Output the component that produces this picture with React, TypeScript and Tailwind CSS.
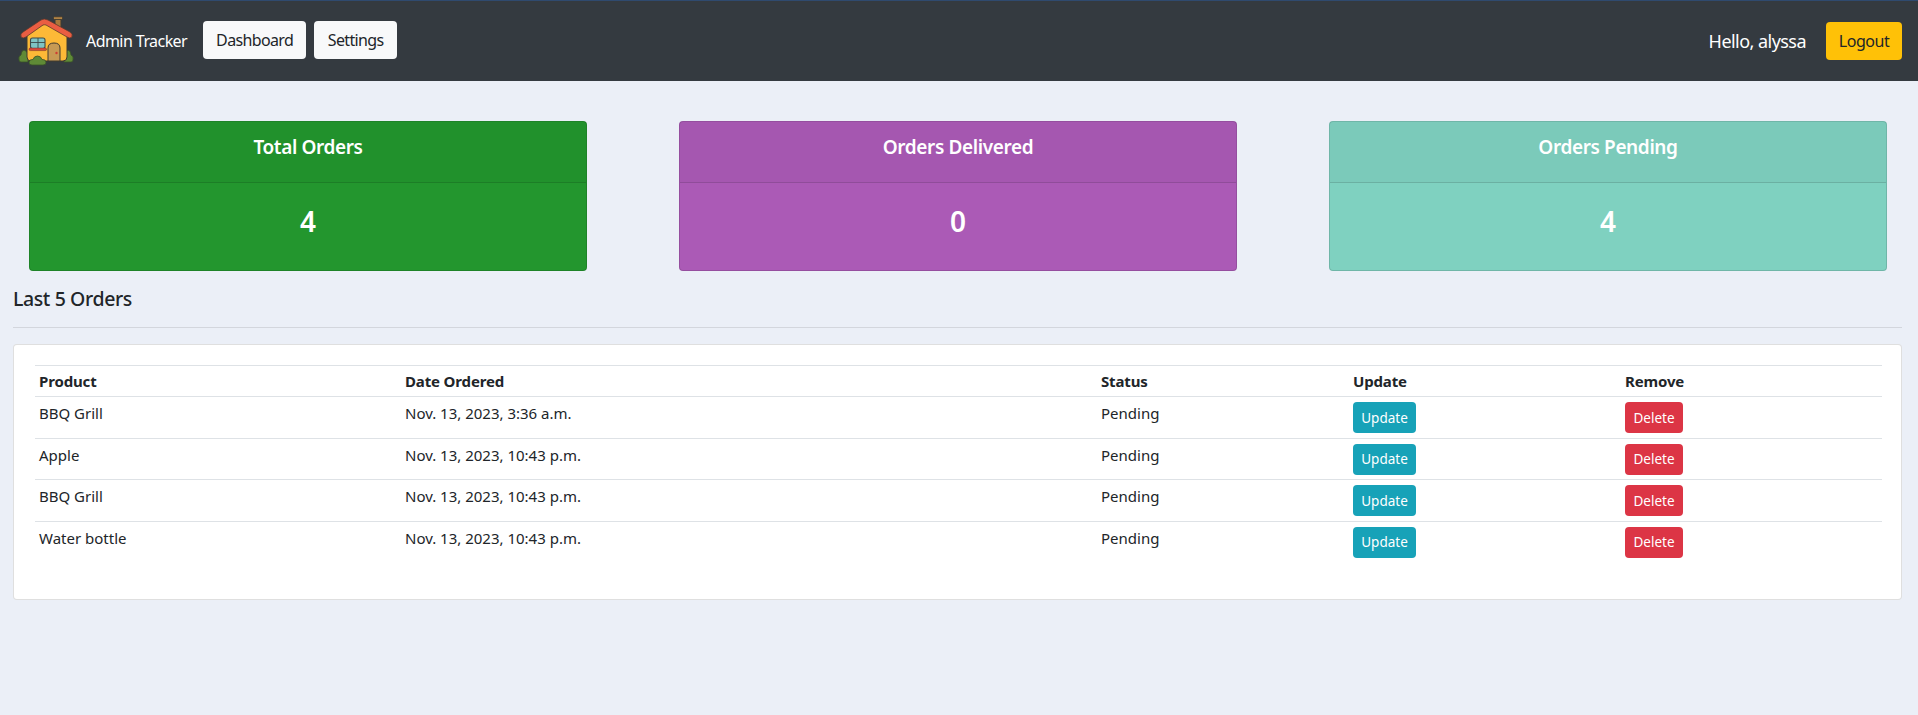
const font = '[font-family:"Noto_Sans",Roboto,sans-serif]';

const orders = [
  { product: 'BBQ Grill', date: 'Nov. 13, 2023, 3:36 a.m.' },
  { product: 'Apple', date: 'Nov. 13, 2023, 10:43 p.m.' },
  { product: 'BBQ Grill', date: 'Nov. 13, 2023, 10:43 p.m.' },
  { product: 'Water bottle', date: 'Nov. 13, 2023, 10:43 p.m.' },
];

function HouseLogo() {
  return (
    <svg viewBox="0 0 56 50" className="w-[56px] h-[50px] shrink-0">
      <rect x="37" y="2" width="6" height="10" fill="#a9793c" stroke="#3f3a30" strokeWidth="1" />
      <rect x="35.5" y="0.8" width="9" height="2.6" rx="0.8" fill="#c08c48" stroke="#3f3a30" strokeWidth="1" />
      <path d="M1 44 Q0 40 3 39 Q3 35 6 34 Q9 35 10 38 V46 H3 Q1 46 1 44 Z" fill="#5f8a36" stroke="#39502a" strokeWidth="0.8" />
      <path d="M55 44 Q56 40 53 39 Q53 35 50 34 Q47 35 46 38 V46 H53 Q55 46 55 44 Z" fill="#5f8a36" stroke="#39502a" strokeWidth="0.8" />
      <path d="M9 19 L27 7 L49 19 V41 Q49 45 45 45 H13 Q9 45 9 41 Z" fill="#fdb937" stroke="#3f3a30" strokeWidth="1" />
      <path d="M3 21 Q2 18 5 16 L23 4 Q26 2 30 4 L52 16 Q55 18 54 21 Q52 23 49 21 L28 9 Q27 8.5 25 9 L8 21 Q5 23 3 21 Z" fill="#ea5d42" stroke="#5c3a2c" strokeWidth="0.8" />
      <rect x="12.5" y="22" width="14.5" height="10.5" rx="2" fill="#7fc4c4" stroke="#3d4a4a" strokeWidth="1.1" />
      <path d="M20 22 V32 M12.5 26.5 H27" stroke="#3d4a4a" strokeWidth="0.9" />
      <rect x="11" y="32" width="17.5" height="2.6" rx="1.3" fill="#d9473a" stroke="#6a3128" strokeWidth="0.5" />
      <path d="M30 45 V32 Q30 27 36 27 Q42 27 42 32 V45 Z" fill="#c79a54" stroke="#3f3a30" strokeWidth="1" />
      <circle cx="38.5" cy="37" r="1.2" fill="#d13c33" />
      <path d="M14 49 Q10.5 49 11 46 Q11.5 43 15 43.5 Q16 40 19.5 40 Q23 40 24 43.5 Q27.5 43 28 46 Q28.5 49 25 49 Z" fill="#5f8a36" stroke="#39502a" strokeWidth="0.8" />
    </svg>
  );
}

function StatCard({ title, value, bg }: { title: string; value: number; bg: string }) {
  return (
    <div className={`w-[558px] h-[150px] rounded border border-black/[.125] text-white text-center flex flex-col ${bg}`}>
      <div className="h-[61px] bg-black/[.03] border-b border-black/[.125] pt-[13px]">
        <h5 className="text-[19px] leading-[24px] font-semibold tracking-[-0.02em]">{title}</h5>
      </div>
      <div className="flex-1 pt-[17px]">
        <h3 className="text-[28px] leading-[42px] font-semibold">{value}</h3>
      </div>
    </div>
  );
}

export default function App() {
  return (
    <div className={`min-h-[715px] bg-[#ebeff7] text-[#212529] ${font}`}>
      <nav className="h-[81px] bg-[#343a40] border-t border-[#2f4a6f] flex items-center pl-[18px] pr-[16px]">
        <HouseLogo />
        <span className="ml-[12px] mr-[16px] text-[16px] text-white tracking-[-0.035em]">Admin Tracker</span>
        <button className="w-[103px] h-[38px] mb-[2px] rounded bg-[#f8f9fa] text-[16px] tracking-[-0.04em] mr-2">Dashboard</button>
        <button className="w-[83px] h-[38px] mb-[2px] rounded bg-[#f8f9fa] text-[16px] tracking-[-0.04em]">Settings</button>
        <span className="ml-auto mr-[20px] text-[18px] text-white tracking-[-0.03em]">Hello, alyssa</span>
        <button className="w-[76px] h-[38px] rounded bg-[#ffc107] text-[16px] tracking-[-0.03em]">Logout</button>
      </nav>

      <div className="pt-[40px] pl-[29px] pr-[31px] flex justify-between">
        <StatCard title="Total Orders" value={4} bg="bg-[#23962e]" />
        <StatCard title="Orders Delivered" value={0} bg="bg-[#ab5ab6]" />
        <StatCard title="Orders Pending" value={4} bg="bg-[#7fd1c0]" />
      </div>

      <div className="pl-[13px] pr-[16px]">
        <h5 className="mt-[16px] text-[19.5px] leading-[24px] font-medium tracking-[-0.02em]">Last 5 Orders</h5>
        <hr className="mt-[16px] mb-[16px] border-t border-black/10" />
        <div className="h-[256px] bg-white rounded border border-black/[.125] pt-[20px] px-[21px]">
          <table className="w-[1847px] table-fixed border-collapse text-[15px] leading-[24px]">
            <colgroup>
              <col className="w-[366px]" />
              <col className="w-[696px]" />
              <col className="w-[252px]" />
              <col className="w-[272px]" />
              <col className="w-[261px]" />
            </colgroup>
            <thead>
              <tr className="border-y border-[#dee2e6] text-left">
                <th className="px-1 py-[3px] font-bold tracking-[-0.01em]">Product</th>
                <th className="px-1 py-[3px] font-bold tracking-[-0.01em]">Date Ordered</th>
                <th className="px-1 py-[3px] font-bold tracking-[-0.01em]">Status</th>
                <th className="px-1 py-[3px] font-bold tracking-[-0.01em]">Update</th>
                <th className="px-1 py-[3px] font-bold tracking-[-0.01em]">Remove</th>
              </tr>
            </thead>
            <tbody>
              {orders.map((order, index) => (
                <tr key={index} className="border-b border-[#dee2e6] last:border-b-0 h-[41.6px]">
                  <td className="p-1 align-top">{order.product}</td>
                  <td className="p-1 align-top">{order.date}</td>
                  <td className="p-1 align-top">Pending</td>
                  <td className="px-1 pt-[5px] pb-[4px] align-top">
                    <button className="block w-[63px] h-[31px] rounded bg-[#17a2b8] text-white text-[13.5px]">Update</button>
                  </td>
                  <td className="px-1 pt-[5px] pb-[4px] align-top">
                    <button className="block w-[58px] h-[31px] rounded bg-[#dc3545] text-white text-[13.5px]">Delete</button>
                  </td>
                </tr>
              ))}
            </tbody>
          </table>
        </div>
      </div>
    </div>
  );
}
